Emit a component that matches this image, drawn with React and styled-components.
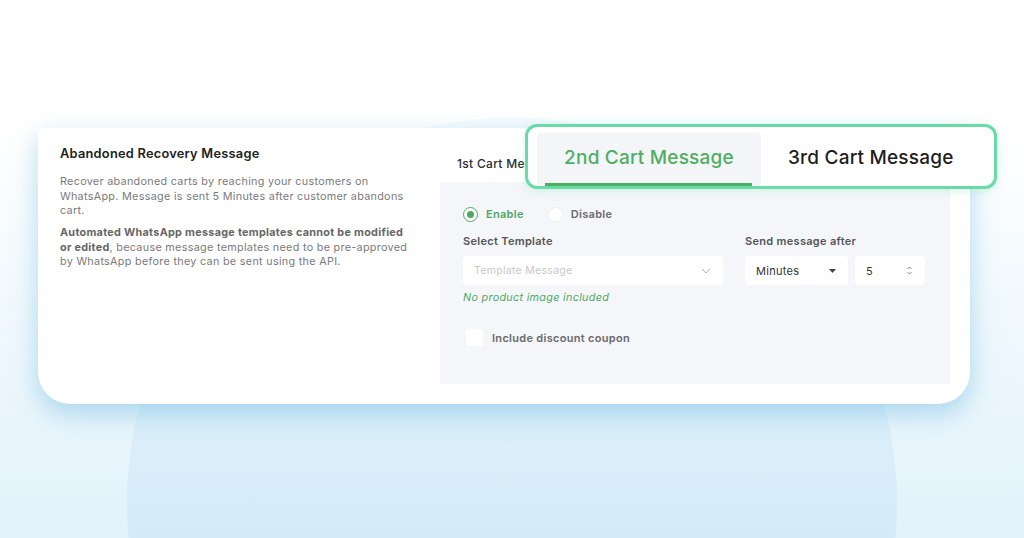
import React from "react";
import styled, { createGlobalStyle } from "styled-components";

const GlobalStyle = createGlobalStyle`
  html, body {
    margin: 0;
    padding: 0;
  }
  body {
    font-family: "Inter", "Noto Sans", sans-serif;
    letter-spacing: 0.3px;
    -webkit-font-smoothing: antialiased;
  }
`;

export default function App() {
  return (
    <>
      <GlobalStyle />
      <Page>
        <Card>
          <InfoColumn>
            <Title>Abandoned Recovery Message</Title>
            <Description>
              Recover abandoned carts by reaching your customers on
              <br />
              WhatsApp. Message is sent 5 Minutes after customer abandons
              <br />
              cart.
            </Description>
            <Description>
              <strong>
                Automated WhatsApp message templates cannot be modified
                <br />
                or edited
              </strong>
              , because message templates need to be pre-approved
              <br />
              by WhatsApp before they can be sent using the API.
            </Description>
          </InfoColumn>

          <SettingsColumn>
            <TabRow>
              <SmallTab>1st Cart Message</SmallTab>
            </TabRow>
            <Panel>
              <RadioRow>
                <RadioOption>
                  <Radio $checked />
                  <RadioLabel $checked>Enable</RadioLabel>
                </RadioOption>
                <RadioOption>
                  <Radio />
                  <RadioLabel>Disable</RadioLabel>
                </RadioOption>
              </RadioRow>

              <FieldGrid>
                <Field>
                  <FieldLabel>Select Template</FieldLabel>
                  <SelectBox $width="260px">
                    <Placeholder>Template Message</Placeholder>
                    <svg width="10" height="6" viewBox="0 0 10 6">
                      <path
                        d="M1 1l4 4 4-4"
                        fill="none"
                        stroke="#b5b5b5"
                        strokeWidth="1"
                      />
                    </svg>
                  </SelectBox>
                  <Hint>No product image included</Hint>
                </Field>
                <Field>
                  <FieldLabel>Send message after</FieldLabel>
                  <InlineFields>
                    <SelectBox $width="103px">
                      <Value>Minutes</Value>
                      <svg width="7" height="4" viewBox="0 0 7 4">
                        <path d="M0 0h7L3.5 4z" fill="#444" />
                      </svg>
                    </SelectBox>
                    <SelectBox $width="70px">
                      <Value>5</Value>
                      <svg width="7" height="11" viewBox="0 0 7 11">
                        <path
                          d="M1.5 4L3.5 2 5.5 4M1.5 7l2 2 2-2"
                          fill="none"
                          stroke="#888"
                          strokeWidth="1"
                        />
                      </svg>
                    </SelectBox>
                  </InlineFields>
                </Field>
              </FieldGrid>

              <CheckRow>
                <CheckBox />
                <CheckLabel>Include discount coupon</CheckLabel>
              </CheckRow>
            </Panel>
          </SettingsColumn>

          <TabHighlight>
            <BigTab $active>2nd Cart Message</BigTab>
            <BigTab>3rd Cart Message</BigTab>
          </TabHighlight>
        </Card>
      </Page>
    </>
  );
}

const Page = styled.div`
  position: relative;
  width: 1024px;
  height: 538px;
  overflow: hidden;
  box-sizing: border-box;
  padding: 128px 54px 0 38px;
  background: linear-gradient(180deg, #ffffff 0%, #ffffff 24%, #eff8fd 62%, #e2f2fb 100%);

  &::before {
    content: "";
    position: absolute;
    left: 127px;
    top: 118px;
    width: 770px;
    height: 770px;
    border-radius: 50%;
    background: linear-gradient(180deg, #f7fbfe 0%, #e6f3fb 25%, #d3ebf8 55%, #cae6f7 100%);
  }
`;

const Card = styled.div`
  position: relative;
  z-index: 1;
  display: grid;
  grid-template-columns: 402px 510px;
  height: 276px;
  box-sizing: border-box;
  padding-bottom: 20px;
  background: #ffffff;
  border-radius: 6px 6px 32px 32px;
  box-shadow: 0 10px 26px rgba(110, 185, 225, 0.5);
`;

const InfoColumn = styled.div`
  padding: 18px 0 0 22px;
`;

const Title = styled.h2`
  margin: 0 0 14px;
  font-size: 12.8px;
  font-weight: 600;
  color: #222222;
  letter-spacing: 0.25px;
`;

const Description = styled.p`
  margin: 0 0 7.5px;
  white-space: nowrap;
  font-size: 10.8px;
  line-height: 14.6px;
  color: #7a7a7a;

  strong {
    font-weight: 700;
    color: #666666;
  }
`;

const SettingsColumn = styled.div`
  display: flex;
  flex-direction: column;
`;

const TabRow = styled.div`
  height: 54px;
  display: flex;
  align-items: flex-end;
  padding: 0 0 11px 17px;
  box-sizing: border-box;
`;

const SmallTab = styled.span`
  font-size: 12px;
  font-weight: 500;
  color: #2b2b2b;
  white-space: nowrap;
`;

const Panel = styled.div`
  flex: 1;
  background: #f5f6fa;
  padding: 24px 24px 0 23px;
  box-sizing: border-box;
`;

const RadioRow = styled.div`
  display: flex;
  gap: 24px;
  align-items: center;
  height: 16px;
`;

const RadioOption = styled.div`
  display: flex;
  align-items: center;
  gap: 8px;
`;

const Radio = styled.span`
  width: 15px;
  height: 15px;
  box-sizing: border-box;
  border-radius: 50%;
  background: #ffffff;
  border: ${(p) => (p.$checked ? "1.5px solid #4da863" : "1px solid #f0f0f0")};
  display: flex;
  align-items: center;
  justify-content: center;

  &::after {
    content: "";
    width: 7px;
    height: 7px;
    border-radius: 50%;
    background: ${(p) => (p.$checked ? "#4da863" : "transparent")};
  }
`;

const RadioLabel = styled.span`
  font-size: 11px;
  font-weight: 600;
  color: ${(p) => (p.$checked ? "#4da863" : "#6b6b6b")};
`;

const FieldGrid = styled.div`
  display: grid;
  grid-template-columns: 282px auto;
  margin-top: 12px;
`;

const Field = styled.div`
  display: flex;
  flex-direction: column;
`;

const FieldLabel = styled.span`
  font-size: 11px;
  font-weight: 600;
  color: #555555;
  margin-bottom: 8px;
  line-height: 14px;
`;

const InlineFields = styled.div`
  display: flex;
  gap: 7px;
`;

const SelectBox = styled.div`
  width: ${(p) => p.$width};
  height: 29px;
  box-sizing: border-box;
  background: #ffffff;
  border-radius: 4px;
  display: flex;
  align-items: center;
  justify-content: space-between;
  padding: 0 12px 0 11px;
`;

const Placeholder = styled.span`
  font-size: 10.5px;
  color: #c8c8c8;
`;

const Value = styled.span`
  font-size: 11px;
  color: #333333;
`;

const Hint = styled.span`
  margin-top: 6px;
  font-size: 10.8px;
  font-style: italic;
  color: #4fa862;
`;

const CheckRow = styled.div`
  display: flex;
  align-items: center;
  gap: 9px;
  margin-top: 25px;
  padding-left: 3px;
`;

const CheckBox = styled.span`
  width: 17px;
  height: 17px;
  background: #ffffff;
  border-radius: 2px;
`;

const CheckLabel = styled.span`
  font-size: 11px;
  font-weight: 600;
  color: #6a6a6a;
`;

const TabHighlight = styled.div`
  position: absolute;
  left: 487px;
  top: -4px;
  width: 472px;
  height: 65px;
  box-sizing: border-box;
  border: 3px solid #68dba6;
  border-radius: 12px;
  background: #ffffff;
  display: flex;
  padding: 6px 0 0 9px;
  box-shadow: 0 2px 10px rgba(104, 219, 166, 0.25);
`;

const BigTab = styled.div`
  width: ${(p) => (p.$active ? "224px" : "auto")};
  flex: ${(p) => (p.$active ? "none" : "1")};
  position: relative;
  display: flex;
  align-items: center;
  justify-content: ${(p) => (p.$active ? "center" : "flex-start")};
  padding: ${(p) => (p.$active ? "0 0 4px" : "0 0 4px 27px")};
  font-size: 19px;
  font-weight: 500;
  letter-spacing: 0.2px;
  color: ${(p) => (p.$active ? "#4fae63" : "#1e1e1e")};
  background: ${(p) => (p.$active ? "#f4f5f8" : "transparent")};
  border-radius: 4px 4px 0 0;
  white-space: nowrap;

  &::after {
    content: "";
    display: ${(p) => (p.$active ? "block" : "none")};
    position: absolute;
    left: 8px;
    right: 9px;
    bottom: 0;
    height: 3px;
    background: #4caf62;
  }
`;
